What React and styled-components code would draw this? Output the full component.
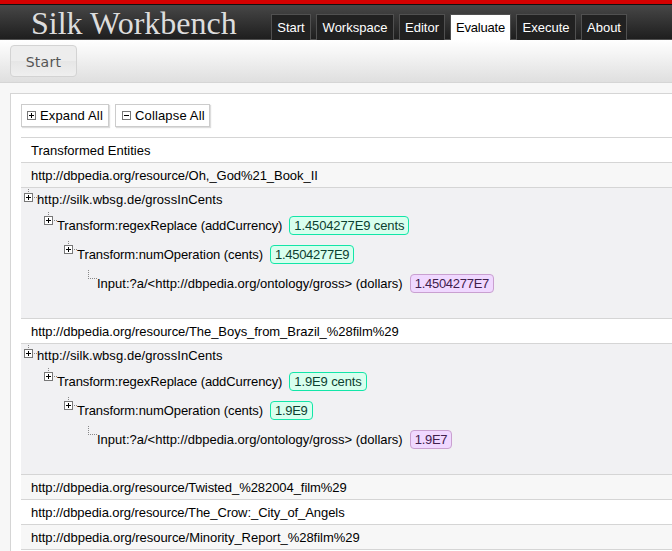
import React from "react";
import styled, { createGlobalStyle } from "styled-components";

const GlobalStyle = createGlobalStyle`
  * { box-sizing: border-box; }
  html { overflow: hidden; }
  body {
    margin: 0;
    background: #f7f7f7;
    color: #000;
    font: 13px/16px "Liberation Sans", Arial, sans-serif;
  }
`;

const Page = styled.div`
  height: 551px;
  overflow: hidden;
`;

const Header = styled.header`
  display: flex;
  align-items: flex-end;
  height: 40px;
  padding-left: 31px;
  border-top: 4px solid #d40000;
  background:
    linear-gradient(#111, #111) 0 0 / 100% 1px no-repeat,
    linear-gradient(#505050, #505050) 0 100% / 100% 1px no-repeat,
    linear-gradient(#484848, #1d1d1d);
`;

const Title = styled.h1`
  width: 240px;
  margin: 0;
  color: #ddd;
  font: 32px/34px "Liberation Serif", "Times New Roman", serif;
  white-space: nowrap;
`;

const Tabs = styled.nav`
  display: flex;
  gap: 5px;
`;

const Tab = styled.a`
  width: ${(p) => p.$width}px;
  height: 26px;
  border: 1px solid #505050;
  border-bottom: 0;
  padding-top: 5px;
  text-align: center;
  white-space: nowrap;
  letter-spacing: ${(p) => (p.$active ? "-0.2px" : "0")};
  color: ${(p) => (p.$active ? "#000" : "#fff")};
  background: ${(p) => (p.$active ? "#fff" : "#212121")};
`;

const Toolbar = styled.div`
  height: 43px;
  padding: 5px 10px;
  border-bottom: 1px solid #d5d5d5;
  background: linear-gradient(#fff, #dfdfdf);
`;

const StartButton = styled.button`
  display: block;
  width: 67px;
  height: 32px;
  padding: 2px 0 0;
  border: 1px solid #d3d3d3;
  border-radius: 4px;
  background: linear-gradient(#ededed 0 50%, #e6e6e6 50%, #efefef);
  color: #555;
  font: 14px/28px "DejaVu Sans", Verdana, sans-serif;
  letter-spacing: 0.3px;
`;

const Panel = styled.main`
  height: 500px;
  margin: 10px 0 0 10px;
  padding: 10px 0 0 10px;
  border: 1px solid #d5d5d5;
  border-width: 1px 0 0 1px;
  background: #fff;
`;

const Actions = styled.div`
  display: flex;
  gap: 6px;
  margin-bottom: 10px;
`;

const ActionButton = styled.button`
  display: flex;
  align-items: center;
  gap: 4px;
  width: ${(p) => p.$width}px;
  height: 23px;
  padding: 0 0 0 ${(p) => p.$inset}px;
  border: 1px solid #ccc;
  background: #fff;
  box-shadow: 1px 1px 1px #ddd;
  color: #000;
  font: inherit;
  letter-spacing: 0.15px;
  white-space: nowrap;
`;

const Row = styled.div`
  height: 25px;
  padding: 5px 0 0 10px;
  border-top: 1px solid #d5d5d5;
  background: ${(p) => (p.$shaded ? "#f7f7f7" : "#fff")};
  letter-spacing: ${(p) => p.$tracking || 0}px;
`;

const Tree = styled.div`
  height: 131px;
  padding-top: 1px;
  border-top: 1px solid #d5d5d5;
  background: #f1f1f3;
`;

const Node = styled.div`
  display: flex;
  align-items: flex-start;
  height: ${(p) => (p.$level ? 29 : 23)}px;
  padding-left: ${(p) => 3 + p.$level * 20}px;
`;

const Label = styled.span`
  padding-top: ${(p) => (p.$root ? 3 : 6)}px;
  letter-spacing: ${(p) => p.$tracking}px;
  white-space: nowrap;
`;

const Value = styled.span`
  height: 19px;
  margin: 4px 0 0 7px;
  padding: 0 4px;
  border: 1px solid ${(p) => (p.$input ? "#c9a0d0" : "#12e6a8")};
  border-radius: 4px;
  background: ${(p) => (p.$input ? "#f0d8ff" : "#d8ffee")};
  color: ${(p) => (p.$input ? "#40204c" : "#0c4030")};
  line-height: 17px;
  letter-spacing: ${(p) => p.$tracking}px;
  white-space: nowrap;
`;

const Glyph = styled.svg`
  display: block;
  flex: none;
  shape-rendering: crispEdges;
`;

function ToggleIcon({ plus }) {
  return (
    <Glyph width="9" height="9" viewBox="0 0 9 9">
      <rect x=".5" y=".5" width="8" height="8" fill="#fff" stroke="#777" />
      <path d={plus ? "M2 4.5h5M4.5 2v5" : "M2 4.5h5"} stroke="#000" />
    </Glyph>
  );
}

function BranchIcon({ leaf }) {
  return (
    <Glyph width="13" height="14" viewBox="0 0 13 14">
      {leaf ? (
        <path d="M4.5 0v8M4 8.5h9" fill="none" stroke="#888" strokeDasharray="1 1" />
      ) : (
        <>
          <path d="M4.5 0v4M10 8.5h3" stroke="#888" strokeDasharray="1 1" />
          <rect x=".5" y="4.5" width="8" height="8" fill="#fff" stroke="#777" />
          <path d="M2 8.5h5M4.5 6v5" stroke="#000" />
        </>
      )}
    </Glyph>
  );
}

const tabs = [
  ["Start", 40],
  ["Workspace", 78],
  ["Editor", 46],
  ["Evaluate", 61],
  ["Execute", 60],
  ["About", 46],
];

const resource = "http://dbpedia.org/resource/";

const nodes = [
  { label: "http://silk.wbsg.de/grossInCents", tracking: 0.06 },
  { label: "Transform:regexReplace (addCurrency)", tracking: -0.11 },
  { label: "Transform:numOperation (cents)", tracking: -0.07 },
  { label: "Input:?a/<http://dbpedia.org/ontology/gross> (dollars)", tracking: 0 },
];

function EntityTree({ values }) {
  return (
    <Tree>
      {nodes.map(({ label, tracking }, level) => (
        <Node key={label} $level={level}>
          <BranchIcon leaf={level === 3} />
          <Label $root={level === 0} $tracking={tracking}>{label}</Label>
          {level > 0 && (
            <Value $input={level === 3} $tracking={level === 1 ? -0.12 : -0.28}>
              {values[level - 1]}
            </Value>
          )}
        </Node>
      ))}
    </Tree>
  );
}

export default function App() {
  return (
    <Page>
      <GlobalStyle />
      <Header>
        <Title>Silk Workbench</Title>
        <Tabs>
          {tabs.map(([name, width]) => (
            <Tab key={name} $width={width} $active={name === "Evaluate"}>{name}</Tab>
          ))}
        </Tabs>
      </Header>
      <Toolbar>
        <StartButton>Start</StartButton>
      </Toolbar>
      <Panel>
        <Actions>
          <ActionButton $width={88} $inset={5}><ToggleIcon plus />Expand All</ActionButton>
          <ActionButton $width={95} $inset={6}><ToggleIcon />Collapse All</ActionButton>
        </Actions>
        <Row>Transformed Entities</Row>
        <Row $shaded $tracking={-0.05}>{resource}Oh,_God%21_Book_II</Row>
        <EntityTree values={["1.4504277E9 cents", "1.4504277E9", "1.4504277E7"]} />
        <Row $tracking={-0.04}>{resource}The_Boys_from_Brazil_%28film%29</Row>
        <EntityTree values={["1.9E9 cents", "1.9E9", "1.9E7"]} />
        <Row $shaded $tracking={-0.06}>{resource}Twisted_%282004_film%29</Row>
        <Row $tracking={-0.07}>{resource}The_Crow:_City_of_Angels</Row>
        <Row $shaded $tracking={-0.03}>{resource}Minority_Report_%28film%29</Row>
        <Row />
      </Panel>
    </Page>
  );
}
